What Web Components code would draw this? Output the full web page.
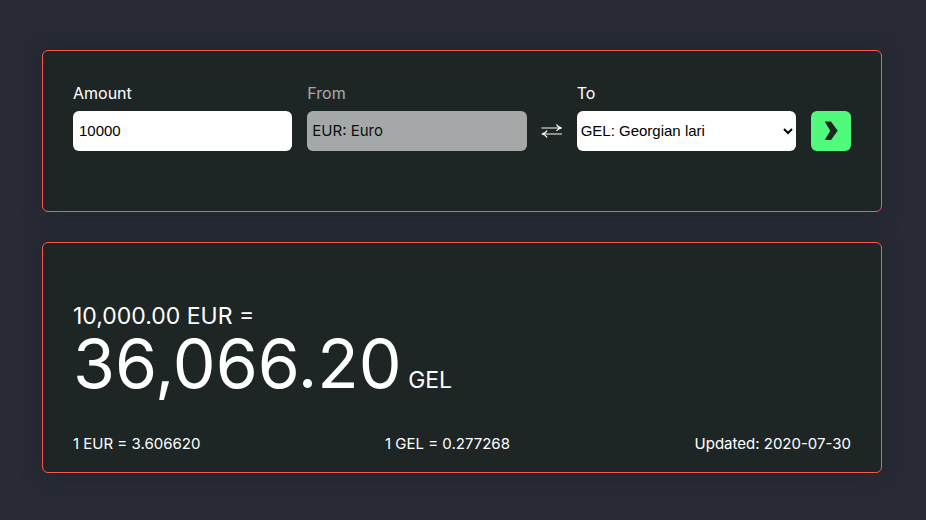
<!DOCTYPE html>
<html lang="en">
<head>
<meta charset="utf-8">
<meta name="viewport" content="width=device-width, initial-scale=1">
<title>Currency converter</title>
<style>
  body {
    margin: 0;
    background: #282a36;
    color: #f8f8f2;
    font: 16px/24px Inter, "Liberation Sans", sans-serif;
  }
</style>
</head>
<body>
<currency-app></currency-app>

<script>
const define = (name, html) => {
  customElements.define(name, class extends HTMLElement {
    constructor() {
      super();
      this.attachShadow({ mode: "open" }).innerHTML = html;
    }
  });
};

define("panel-card", `
  <style>
    :host {
      display: block;
      box-sizing: border-box;
      padding: 30px 30px 18px;
      background: #1e2625;
      border: 1px solid #ff5555;
      border-radius: 6px;
      box-shadow: 0 0 20px #1e2625;
    }
  </style>
  <slot></slot>`);

define("converter-form", `
  <style>
    :host { display: block; }
    form {
      display: grid;
      grid-template-columns: 1fr 1fr 20px 1fr 40px;
      column-gap: 15px;
      align-items: end;
      padding-bottom: 42px;
    }
    .field { display: grid; gap: 6px; min-width: 0; color: #fff; }
    .off { opacity: .6; }
    input, select, button {
      box-sizing: border-box;
      width: 100%;
      height: 40px;
      margin: 0;
      border: 0;
      border-radius: 6px;
      background: #fff;
      color: #000;
      opacity: 1;
    }
    input { padding: 0 6px 2px; font: 15px "Liberation Sans", Arial, sans-serif; }
    select { padding: 0 0 2px; font: 15px "Liberation Sans", Arial, sans-serif; }
    .off select {
      appearance: none;
      padding: 0 5px 2px;
      font-family: Inter, sans-serif;
    }
    button { padding: 0; background: #50fa7b; }
    svg { display: block; flex: none; }
    button svg { margin: auto; }
    .swap { height: 40px; display: flex; align-items: center; justify-content: center; }
  </style>
  <form>
    <div class="field">
      <label for="amount">Amount</label>
      <input id="amount" type="text" inputmode="decimal" value="10000">
    </div>
    <div class="field off">
      <label for="from">From</label>
      <select id="from" disabled><option>EUR: Euro</option></select>
    </div>
    <div class="swap">
      <svg width="22" height="16" viewBox="0 0 22 16" fill="none" stroke="#f8f8f2" stroke-width="1.2" aria-hidden="true">
        <path d="M0.5 5H20.5M15.5 1.5Q17 4.5 20.8 5Q17 5.5 15.5 8M21 11H1M6 7.5Q4.5 10.5 .7 11Q4.5 11.5 6 14.5"/>
      </svg>
    </div>
    <div class="field">
      <label for="to">To</label>
      <select id="to"><option>GEL: Georgian lari</option></select>
    </div>
    <button type="submit" aria-label="Convert">
      <svg width="14" height="20" viewBox="0 0 14 20" fill="#1e2625" aria-hidden="true">
        <path d="M.7 .5H7L13.7 9.7L7 19H.7L6.3 9.7Z"/>
      </svg>
    </button>
  </form>`);

define("conversion-result", `
  <style>
    :host { display: block; padding-top: 25px; color: #fff; }
    p { margin: 0; }
    .source { font-size: 23px; line-height: 36px; }
    .total { font-size: 23px; line-height: 58px; }
    .value { font-size: 68px; }
    .rates {
      display: flex;
      justify-content: space-between;
      padding-top: 25px;
      font-size: 15px;
      line-height: 20px;
    }
  </style>
  <p class="source">10,000.00 EUR =</p>
  <p class="total"><span class="value">36,066.20</span> <span>GEL</span></p>
  <div class="rates">
    <span>1 EUR = 3.606620</span>
    <span>1 GEL = 0.277268</span>
    <span>Updated: 2020-07-30</span>
  </div>`);

define("currency-app", `
  <style>
    :host {
      display: grid;
      gap: 30px;
      max-width: 840px;
      margin: 0 auto;
      padding: 50px 44px 47px 42px;
    }
  </style>
  <panel-card><converter-form></converter-form></panel-card>
  <panel-card><conversion-result></conversion-result></panel-card>`);
</script>
</body>
</html>
